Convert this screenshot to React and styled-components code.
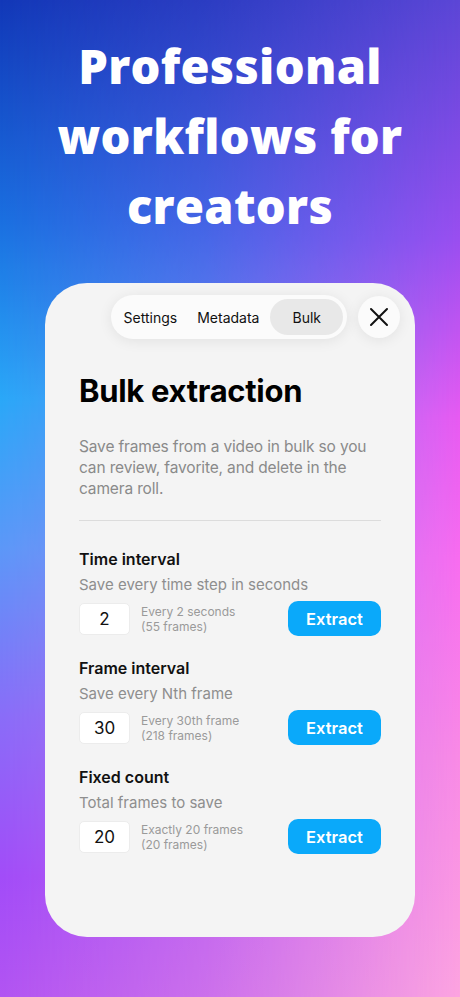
import React from 'react';
import styled, { createGlobalStyle } from 'styled-components';

const GlobalStyle = createGlobalStyle`
  html, body {
    margin: 0;
    padding: 0;
  }
  body {
    font-family: Inter, "Liberation Sans", sans-serif;
    -webkit-font-smoothing: antialiased;
  }
`;

const Page = styled.div`
  position: relative;
  width: 460px;
  height: 997px;
  overflow: hidden;
  background: linear-gradient(
    to bottom,
    #1238b8 0%,
    #1a6fe0 22%,
    #2aa8f8 40%,
    #5c98f8 55%,
    #8a6cf8 72%,
    #a24cf8 88%,
    #b254f2 100%
  );

  &::before {
    content: '';
    position: absolute;
    inset: 0;
    background: linear-gradient(
      to bottom,
      #5c46d6 0%,
      #9a4ef0 24%,
      #e85af2 42%,
      #f86cf0 56%,
      #f98ae6 76%,
      #fca4e0 100%
    );
    -webkit-mask-image: linear-gradient(to right, transparent 0%, rgba(0, 0, 0, 0.35) 45%, #000 100%);
    mask-image: linear-gradient(to right, transparent 0%, rgba(0, 0, 0, 0.35) 45%, #000 100%);
  }
`;

const Content = styled.div`
  position: relative;
  z-index: 1;
  display: flex;
  flex-direction: column;
  align-items: center;
  padding-top: 31px;
`;

const Headline = styled.h1`
  margin: 0;
  width: 100%;
  text-align: center;
  color: #fff;
  font-family: "Open Sans", Inter, sans-serif;
  font-weight: 800;
  font-size: 47px;
  line-height: 70px;
  letter-spacing: 0.3px;
`;

const Card = styled.div`
  margin-top: 42px;
  width: 370px;
  height: 654px;
  box-sizing: border-box;
  background: #f4f4f4;
  border-radius: 42px;
  padding: 12px 15px 0 34px;
`;

const TopBar = styled.div`
  display: flex;
  justify-content: flex-end;
  align-items: center;
  gap: 11px;
`;

const Tabs = styled.div`
  display: flex;
  align-items: center;
  height: 44px;
  box-sizing: border-box;
  padding: 4px;
  background: #fbfbfb;
  border-radius: 22px;
  box-shadow: 0 2px 14px rgba(0, 0, 0, 0.08);
`;

const Tab = styled.div`
  height: 36px;
  display: flex;
  align-items: center;
  padding: 0 ${props => props.$pad}px;
  border-radius: 18px;
  background: ${props => (props.$active ? '#e8e8e8' : 'transparent')};
  font-size: 14px;
  color: #111;
`;

const CloseButton = styled.div`
  width: 42px;
  height: 42px;
  border-radius: 50%;
  background: #fbfbfb;
  box-shadow: 0 2px 14px rgba(0, 0, 0, 0.08);
  display: flex;
  align-items: center;
  justify-content: center;
`;

const Body = styled.div`
  padding-right: 19px;
`;

const Title = styled.h2`
  margin: 33px 0 0;
  font-size: 31px;
  font-weight: 700;
  color: #000;
  letter-spacing: -0.3px;
`;

const Description = styled.p`
  margin: 27px 0 0;
  font-size: 15.5px;
  line-height: 21px;
  letter-spacing: -0.15px;
  color: #8a8a8a;
`;

const Divider = styled.div`
  margin-top: 21px;
  height: 1px;
  background: #dcdcdc;
`;

const Section = styled.div`
  margin-top: ${props => (props.$first ? 28 : 22)}px;
`;

const SectionTitle = styled.div`
  font-size: 16px;
  font-weight: 600;
  color: #111;
  line-height: 20px;
`;

const SectionHint = styled.div`
  margin-top: 6px;
  font-size: 15px;
  color: #8e8e8e;
  line-height: 20px;
`;

const Row = styled.div`
  margin-top: 6px;
  display: flex;
  align-items: center;
`;

const ValueBox = styled.div`
  width: 51px;
  height: 32px;
  box-sizing: border-box;
  background: #fff;
  border: 1px solid #ececec;
  border-radius: 5px;
  display: flex;
  align-items: center;
  justify-content: center;
  font-size: 17px;
  color: #111;
`;

const Info = styled.div`
  margin-left: 11px;
  flex: 1;
  font-size: 12px;
  line-height: 15px;
  color: #9a9a9a;
`;

const ExtractButton = styled.div`
  width: 93px;
  height: 35px;
  border-radius: 10px;
  background: #0aa9fa;
  color: #fff;
  font-size: 16.5px;
  font-weight: 600;
  display: flex;
  align-items: center;
  justify-content: center;
`;

const sections = [
  { title: 'Time interval', hint: 'Save every time step in seconds', value: '2', info: ['Every 2 seconds', '(55 frames)'] },
  { title: 'Frame interval', hint: 'Save every Nth frame', value: '30', info: ['Every 30th frame', '(218 frames)'] },
  { title: 'Fixed count', hint: 'Total frames to save', value: '20', info: ['Exactly 20 frames', '(20 frames)'] },
];

const App = () => (
  <Page>
    <GlobalStyle />
    <Content>
      <Headline>
        Professional<br />workflows for<br />creators
      </Headline>
      <Card>
        <TopBar>
          <Tabs>
            <Tab $pad={9}>Settings</Tab>
            <Tab $pad={11}>Metadata</Tab>
            <Tab $pad={22} $active>Bulk</Tab>
          </Tabs>
          <CloseButton>
            <svg width="20" height="20" viewBox="0 0 20 20">
              <path d="M2 2 L18 18 M18 2 L2 18" stroke="#111" strokeWidth="2" strokeLinecap="round" />
            </svg>
          </CloseButton>
        </TopBar>
        <Body>
          <Title>Bulk extraction</Title>
          <Description>
            Save frames from a video in bulk so you can review, favorite, and delete in the camera roll.
          </Description>
          <Divider />
          {sections.map((s, i) => (
            <Section key={s.title} $first={i === 0}>
              <SectionTitle>{s.title}</SectionTitle>
              <SectionHint>{s.hint}</SectionHint>
              <Row>
                <ValueBox>{s.value}</ValueBox>
                <Info>
                  {s.info[0]}<br />{s.info[1]}
                </Info>
                <ExtractButton>Extract</ExtractButton>
              </Row>
            </Section>
          ))}
        </Body>
      </Card>
    </Content>
  </Page>
);

export default App;
